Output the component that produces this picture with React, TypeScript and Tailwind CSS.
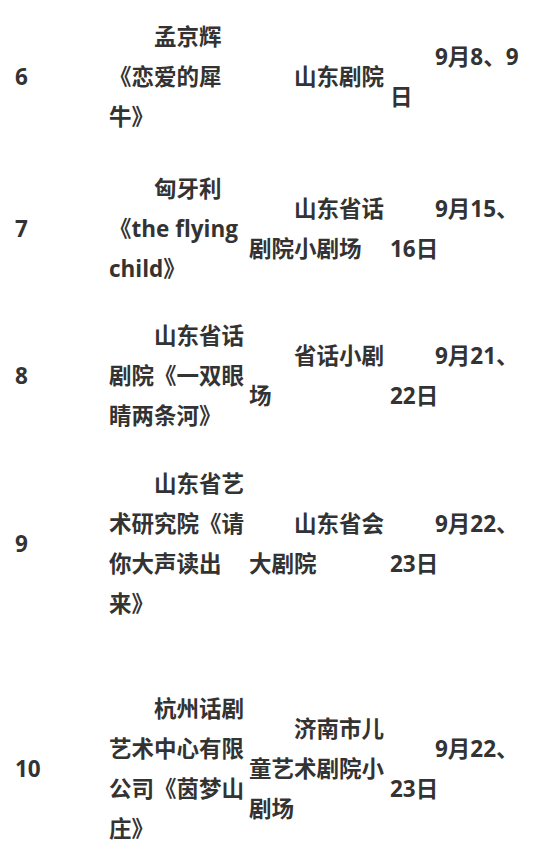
import React from "react";

type Row = { n: string; title: string; venue: string; date: string; h: string; mt: string };

const rows: Row[] = [
  { n: "6", title: "孟京辉《恋爱的犀牛》", venue: "山东剧院", date: "9月8、9日", h: "h-[120px]", mt: "mt-[17px]" },
  { n: "7", title: "匈牙利《the flying child》", venue: "山东省话剧院小剧场", date: "9月15、16日", h: "h-[120px]", mt: "mt-[32px]" },
  { n: "8", title: "山东省话剧院《一双眼睛两条河》", venue: "省话小剧场", date: "9月21、22日", h: "h-[120px]", mt: "mt-[27px]" },
  { n: "9", title: "山东省艺术研究院《请你大声读出来》", venue: "山东省会大剧院", date: "9月22、23日", h: "h-[160px]", mt: "mt-[28px]" },
  { n: "10", title: "杭州话剧艺术中心有限公司《茵梦山庄》", venue: "济南市儿童艺术剧院小剧场", date: "9月22、23日", h: "h-[160px]", mt: "mt-[65px]" },
];

export default function App() {
  return (
    <div className="w-[550px] h-[846px] overflow-hidden bg-white text-[#333] font-bold text-[22.5px] leading-[40px] font-['Open_Sans','Noto_Sans_CJK_SC',sans-serif]">
      {rows.map((r) => (
        <div key={r.n} className={`grid grid-cols-[109px_140px_141px_142px] items-center ${r.h} ${r.mt}`}>
          <div className="pl-[15px]">{r.n}</div>
          <div className="indent-[2em]">{r.title}</div>
          <div className="indent-[2em]">{r.venue}</div>
          <div className="indent-[2em]">{r.date}</div>
        </div>
      ))}
    </div>
  );
}
